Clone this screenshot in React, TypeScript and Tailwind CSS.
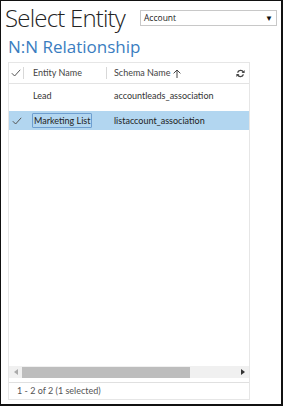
import React from "react";

const font = { fontFamily: '"Open Sans", "Noto Sans", sans-serif' };
const small = { fontFamily: 'Lato, "Open Sans", sans-serif' };

function Check({ className = "" }: { className?: string }) {
  return (
    <svg width="10" height="8" viewBox="0 0 10 8" className={className}>
      <path d="M0.8 4.2 L3.6 7 L9.2 0.8" fill="none" stroke="#555" strokeWidth="1" />
    </svg>
  );
}

function Refresh() {
  return (
    <svg width="9" height="9" viewBox="0 0 10 10">
      <path d="M8.2 3.6 A3.4 3.4 0 0 0 1.8 4" fill="none" stroke="#444" strokeWidth="1.6" />
      <path d="M1.8 6.4 A3.4 3.4 0 0 0 8.2 6" fill="none" stroke="#444" strokeWidth="1.6" />
      <path d="M9.6 1 L9.6 4.4 L6.2 4.4 Z" fill="#444" />
      <path d="M0.4 9 L0.4 5.6 L3.8 5.6 Z" fill="#444" />
    </svg>
  );
}

export default function App() {
  return (
    <div
      className="w-[283px] h-[406px] bg-white border-l border-t border-r-2 border-b-2 border-[#111] flex flex-col"
      style={font}
    >
      <div className="flex items-start h-[34px]">
        <div className="text-[24px] font-light text-[#222] leading-none ml-[4px] mt-[5px] whitespace-nowrap shrink-0 tracking-[-0.8px]">
          Select Entity
        </div>
        <div className="ml-auto mr-[4px] mt-[9px] w-[137px] h-[16px] border border-[#c8c8c8] flex items-center px-[3px] shrink-0">
          <span className="text-[8.5px] text-[#222] leading-none">Account</span>
          <span className="ml-auto text-[8px] text-[#111] leading-none">▼</span>
        </div>
      </div>
      <div className="text-[17px] text-[#3a7dbf] leading-none ml-[7px] mt-[3px] h-[24px] whitespace-nowrap">
        N:N Relationship
      </div>
      <div
        className="ml-[7px] w-[242px] h-[338px] border border-[#e6e6e6] flex flex-col"
        style={small}
      >
        <div className="h-[21px] flex items-center border-b border-[#e3e3e3] text-[9px] text-[#444]">
          <div className="w-[14px] flex justify-center">
            <Check />
          </div>
          <div className="w-px h-[12px] bg-[#d8d8d8]" />
          <div className="w-[82px] pl-[9px]">Entity Name</div>
          <div className="w-px h-[12px] bg-[#d8d8d8]" />
          <div className="pl-[7px] flex items-center gap-[3px]">
            Schema Name
            <svg width="8" height="9" viewBox="0 0 8 9">
              <path d="M4 9 V1 M0.6 4.4 L4 1 L7.4 4.4" fill="none" stroke="#444" strokeWidth="1" />
            </svg>
          </div>
          <div className="ml-auto mr-[4px] flex items-center">
            <Refresh />
          </div>
        </div>
        <div className="h-[22px] flex items-center text-[9px] text-[#333] mt-[1px]">
          <div className="w-[24px]" />
          <div className="w-[74px]">Lead</div>
          <div className="pl-[7px]">accountleads_association</div>
        </div>
        <div className="h-[19px] mt-[4px] flex items-center text-[9px] text-[#222] bg-[#b2d6f0]">
          <div className="w-[15px] flex justify-center">
            <Check />
          </div>
          <div className="w-[8px]" />
          <div className="w-[74px]">
            <span className="border border-[#6f9fd0] rounded-[1px] px-[1px] leading-[13px] inline-block">
              Marketing List
            </span>
          </div>
          <div className="pl-[8px]">listaccount_association</div>
        </div>
        <div className="flex-1" />
        <div className="h-[12px] bg-[#f0f0f0] flex items-center">
          <div className="w-[13px] flex justify-center">
            <svg width="4" height="6" viewBox="0 0 4 6">
              <path d="M4 0 L0 3 L4 6 Z" fill="#aaa" />
            </svg>
          </div>
          <div className="w-[168px] h-[11px] bg-[#bdbdbd]" />
          <div className="ml-auto w-[13px] flex justify-center">
            <svg width="4" height="6" viewBox="0 0 4 6">
              <path d="M0 0 L4 3 L0 6 Z" fill="#333" />
            </svg>
          </div>
        </div>
        <div className="h-[4px]" />
        <div className="border-t border-[#e0e0e0] h-[17px] flex items-center pl-[8px] text-[9px] text-[#555]">
          1 - 2 of 2 (1 selected)
        </div>
      </div>
    </div>
  );
}
